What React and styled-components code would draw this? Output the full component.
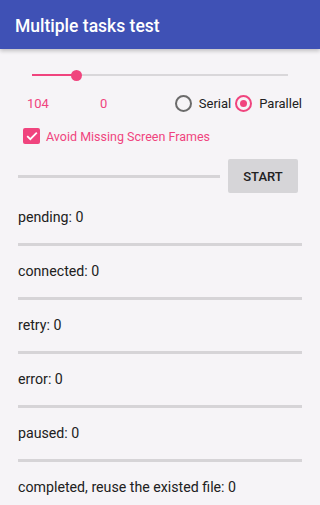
import React from 'react';
import styled, { createGlobalStyle } from 'styled-components';

const GlobalStyle = createGlobalStyle`
  html, body {
    margin: 0;
    padding: 0;
    background: #f6f4f7;
    font-family: Roboto, "Noto Sans", sans-serif;
  }
`;

const PINK = '#f0447e';

const Page = styled.div`
  width: 320px;
  height: 505px;
  overflow: hidden;
  background: #f6f4f7;
`;

const Toolbar = styled.div`
  height: 49px;
  background: #3f51b5;
  display: flex;
  align-items: center;
  padding-left: 15px;
  padding-top: 3px;
  box-sizing: border-box;
  color: #fff;
  font-size: 17.5px;
  font-weight: 500;
  box-shadow: 0 2px 4px rgba(0, 0, 0, 0.22);
`;

const Content = styled.div`
  padding: 0 18px;
`;

// Slider
const SliderRow = styled.div`
  height: 20px;
  margin-top: 16px;
  padding: 0 14px;
  display: flex;
  align-items: center;
`;

const Track = styled.div`
  position: relative;
  flex: 1;
  height: 2px;
  background: #d9d7da;
`;

const TrackFill = styled.div`
  position: absolute;
  left: 0;
  top: 0;
  height: 2px;
  background: ${PINK};
`;

const Thumb = styled.div`
  position: absolute;
  top: -4.5px;
  width: 11px;
  height: 11px;
  margin-left: -5.5px;
  border-radius: 50%;
  background: ${PINK};
`;

// Numbers + radios
const OptionsRow = styled.div`
  height: 24px;
  margin-top: 6px;
  display: flex;
  align-items: center;
`;

const Number = styled.span`
  box-sizing: border-box;
  color: ${PINK};
  font-size: 13px;
  width: ${(p) => p.w}px;
  padding-left: ${(p) => p.pl || 0}px;
`;

const RadioGroup = styled.div`
  margin-left: auto;
  display: flex;
  align-items: center;
`;

const RadioLabel = styled.label`
  display: flex;
  align-items: center;
  gap: 7px;
  font-size: 13px;
  color: #212121;
  margin-left: ${(p) => p.ml || 0}px;
`;

const RadioCircle = styled.span`
  width: 13px;
  height: 13px;
  border-radius: 50%;
  border: 2px solid ${(p) => (p.checked ? PINK : '#6b6b6b')};
  display: flex;
  align-items: center;
  justify-content: center;

  &::after {
    content: '';
    display: ${(p) => (p.checked ? 'block' : 'none')};
    width: 7px;
    height: 7px;
    border-radius: 50%;
    background: ${PINK};
  }
`;

// Checkbox
const CheckRow = styled.div`
  margin-top: 13px;
  margin-left: 5px;
  height: 16px;
  display: flex;
  align-items: center;
  gap: 6px;
  color: ${PINK};
  font-size: 12.5px;
`;

const CheckBox = styled.span`
  width: 17px;
  height: 16px;
  border-radius: 2px;
  background: ${PINK};
  display: flex;
  align-items: center;
  justify-content: center;
`;

// Progress + button
const ProgressRow = styled.div`
  margin-top: 15px;
  margin-right: 4px;
  display: flex;
  align-items: center;
  gap: 8px;
`;

const Bar = styled.div`
  flex: ${(p) => (p.grow ? 1 : 'none')};
  height: 3px;
  background: #d6d4d7;
`;

const StartButton = styled.button`
  width: 70px;
  height: 34px;
  border: none;
  border-radius: 2px;
  background: #d6d5d8;
  color: #212121;
  font-family: Roboto, sans-serif;
  font-size: 13px;
  font-weight: 500;
  padding: 0;
`;

// Task items
const Item = styled.div`
  padding-top: ${(p) => (p.first ? 13.5 : 14.6)}px;
`;

const ItemText = styled.div`
  height: 20px;
  line-height: 20px;
  font-size: 14.2px;
  color: #212121;
  margin-bottom: 16.5px;
`;

const items = [
  'pending: 0',
  'connected: 0',
  'retry: 0',
  'error: 0',
  'paused: 0',
  'completed, reuse the existed file: 0',
];

const App = () => {
  return (
    <Page>
      <GlobalStyle />
      <Toolbar>Multiple tasks test</Toolbar>
      <Content>
        <SliderRow>
          <Track>
            <TrackFill style={{ width: '17.2%' }} />
            <Thumb style={{ left: '17.2%' }} />
          </Track>
        </SliderRow>
        <OptionsRow>
          <Number w={82} pl={9}>104</Number>
          <Number w={20}>0</Number>
          <RadioGroup>
            <RadioLabel>
              <RadioCircle />
              Serial
            </RadioLabel>
            <RadioLabel ml={4}>
              <RadioCircle checked />
              Parallel
            </RadioLabel>
          </RadioGroup>
        </OptionsRow>
        <CheckRow>
          <CheckBox>
            <svg width="12" height="10" viewBox="0 0 12 10">
              <path d="M1.2 5.2 L4.3 8.2 L10.8 1.6" fill="none" stroke="#fff" strokeWidth="1.8" />
            </svg>
          </CheckBox>
          Avoid Missing Screen Frames
        </CheckRow>
        <ProgressRow>
          <Bar grow />
          <StartButton>START</StartButton>
        </ProgressRow>
        {items.map((t, i) => (
          <Item key={t} first={i === 0}>
            <ItemText>{t}</ItemText>
            {i < items.length - 1 && <Bar />}
          </Item>
        ))}
      </Content>
    </Page>
  );
};

export default App;
